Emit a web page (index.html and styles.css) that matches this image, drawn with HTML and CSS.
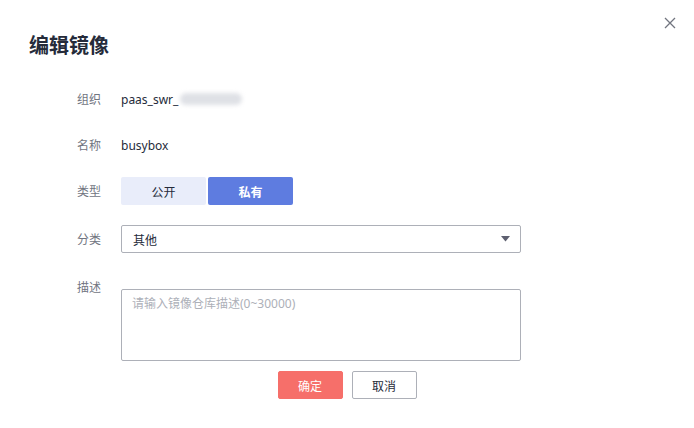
FILE: index.html
```html
<!DOCTYPE html>
<html lang="zh">
<head>
<meta charset="utf-8">
<link rel="stylesheet" href="styles.css">
</head>
<body>
<div class="dialog">
  <button class="close" aria-label="close">
    <svg width="12" height="12" viewBox="0 0 12 12"><path d="M1 1L11 11M11 1L1 11" stroke="#71757f" stroke-width="1.3" fill="none"/></svg>
  </button>
  <h1 class="title">编辑镜像</h1>
  <div class="form">
    <div class="row r1">
      <div class="label">组织</div>
      <div class="value">paas_swr_<span class="blur"></span></div>
    </div>
    <div class="row r2">
      <div class="label">名称</div>
      <div class="value">busybox</div>
    </div>
    <div class="row r3">
      <div class="label">类型</div>
      <div class="toggle">
        <div class="opt">公开</div>
        <div class="opt active">私有</div>
      </div>
    </div>
    <div class="row r4">
      <div class="label">分类</div>
      <div class="select">
        <span>其他</span>
        <svg width="9" height="6" viewBox="0 0 9 6"><path d="M0 0H9L4.5 5.5Z" fill="#5e6070"/></svg>
      </div>
    </div>
    <div class="row r5">
      <div class="label">描述</div>
      <div class="textarea">请输入镜像仓库描述(0~30000)</div>
    </div>
  </div>
  <div class="actions">
    <button class="btn primary">确定</button>
    <button class="btn">取消</button>
  </div>
</div>
</body>
</html>
```
FILE: styles.css
```css
html, body {
  margin: 0;
  padding: 0;
  background: #fff;
}
body {
  font-family: "Noto Sans", "Noto Sans CJK SC", sans-serif;
  font-size: 12px;
  color: #252b3a;
  width: 694px;
  height: 428px;
  overflow: hidden;
}
.dialog {
  position: relative;
  padding-top: 31px;
}
.close {
  position: absolute;
  top: 17px;
  left: 664px;
  width: 13px;
  height: 13px;
  padding: 0;
  border: 0;
  background: none;
  display: flex;
}
.title {
  margin: 0 0 0 29px;
  font-size: 20px;
  line-height: 28px;
  font-weight: 700;
  color: #252b3a;
  font-family: "Noto Sans CJK SC", sans-serif;
}
.form {
  padding-left: 77px;
  margin-top: 26px;
}
.row {
  display: flex;
  align-items: center;
  height: 28px;
}
.label {
  width: 44px;
  color: #71757f;
  font-family: "Noto Sans CJK SC", sans-serif;
  line-height: 28px;
  flex: none;
}
.value {
  display: flex;
  align-items: center;
  color: #252b3a;
}
.blur {
  display: inline-block;
  width: 62px;
  height: 12px;
  margin-left: 2px;
  background: #dfe1e6;
  border-radius: 6px;
  filter: blur(2px);
}
.r2, .r3 { margin-top: 18px; }
.r4 { margin-top: 20px; }
.r5 { margin-top: 20px; align-items: flex-start; height: auto; }
.toggle {
  display: flex;
  gap: 2px;
  height: 28px;
}
.opt {
  width: 85px;
  display: flex;
  align-items: center;
  justify-content: center;
  background: #e9edfa;
  border-radius: 2px;
  font-family: "Noto Sans CJK SC", sans-serif;
  color: #252b3a;
}
.opt.active {
  background: #5e7ce0;
  color: #fff;
  font-weight: 700;
}
.select {
  width: 400px;
  height: 28px;
  box-sizing: border-box;
  border: 1px solid #adb0b8;
  border-radius: 2px;
  display: flex;
  align-items: center;
  justify-content: space-between;
  padding: 0 10px 0 11px;
  font-family: "Noto Sans CJK SC", sans-serif;
}
.textarea {
  margin-top: 16px;
  width: 400px;
  height: 72px;
  box-sizing: border-box;
  border: 1px solid #adb0b8;
  border-radius: 2px;
  padding: 6px 10px;
  color: #adb0b8;
  line-height: 16px;
  font-family: "Noto Sans", "Noto Sans CJK SC", sans-serif;
}
.actions {
  display: flex;
  justify-content: center;
  gap: 9px;
  margin-top: 10px;
}
.btn {
  width: 65px;
  height: 28px;
  box-sizing: border-box;
  border: 1px solid #adb0b8;
  border-radius: 2px;
  background: #fff;
  color: #252b3a;
  font-family: "Noto Sans CJK SC", sans-serif;
  font-size: 12px;
  padding: 0;
}
.btn.primary {
  background: #f66f6a;
  border-color: #f66f6a;
  color: #fff;
}
```
